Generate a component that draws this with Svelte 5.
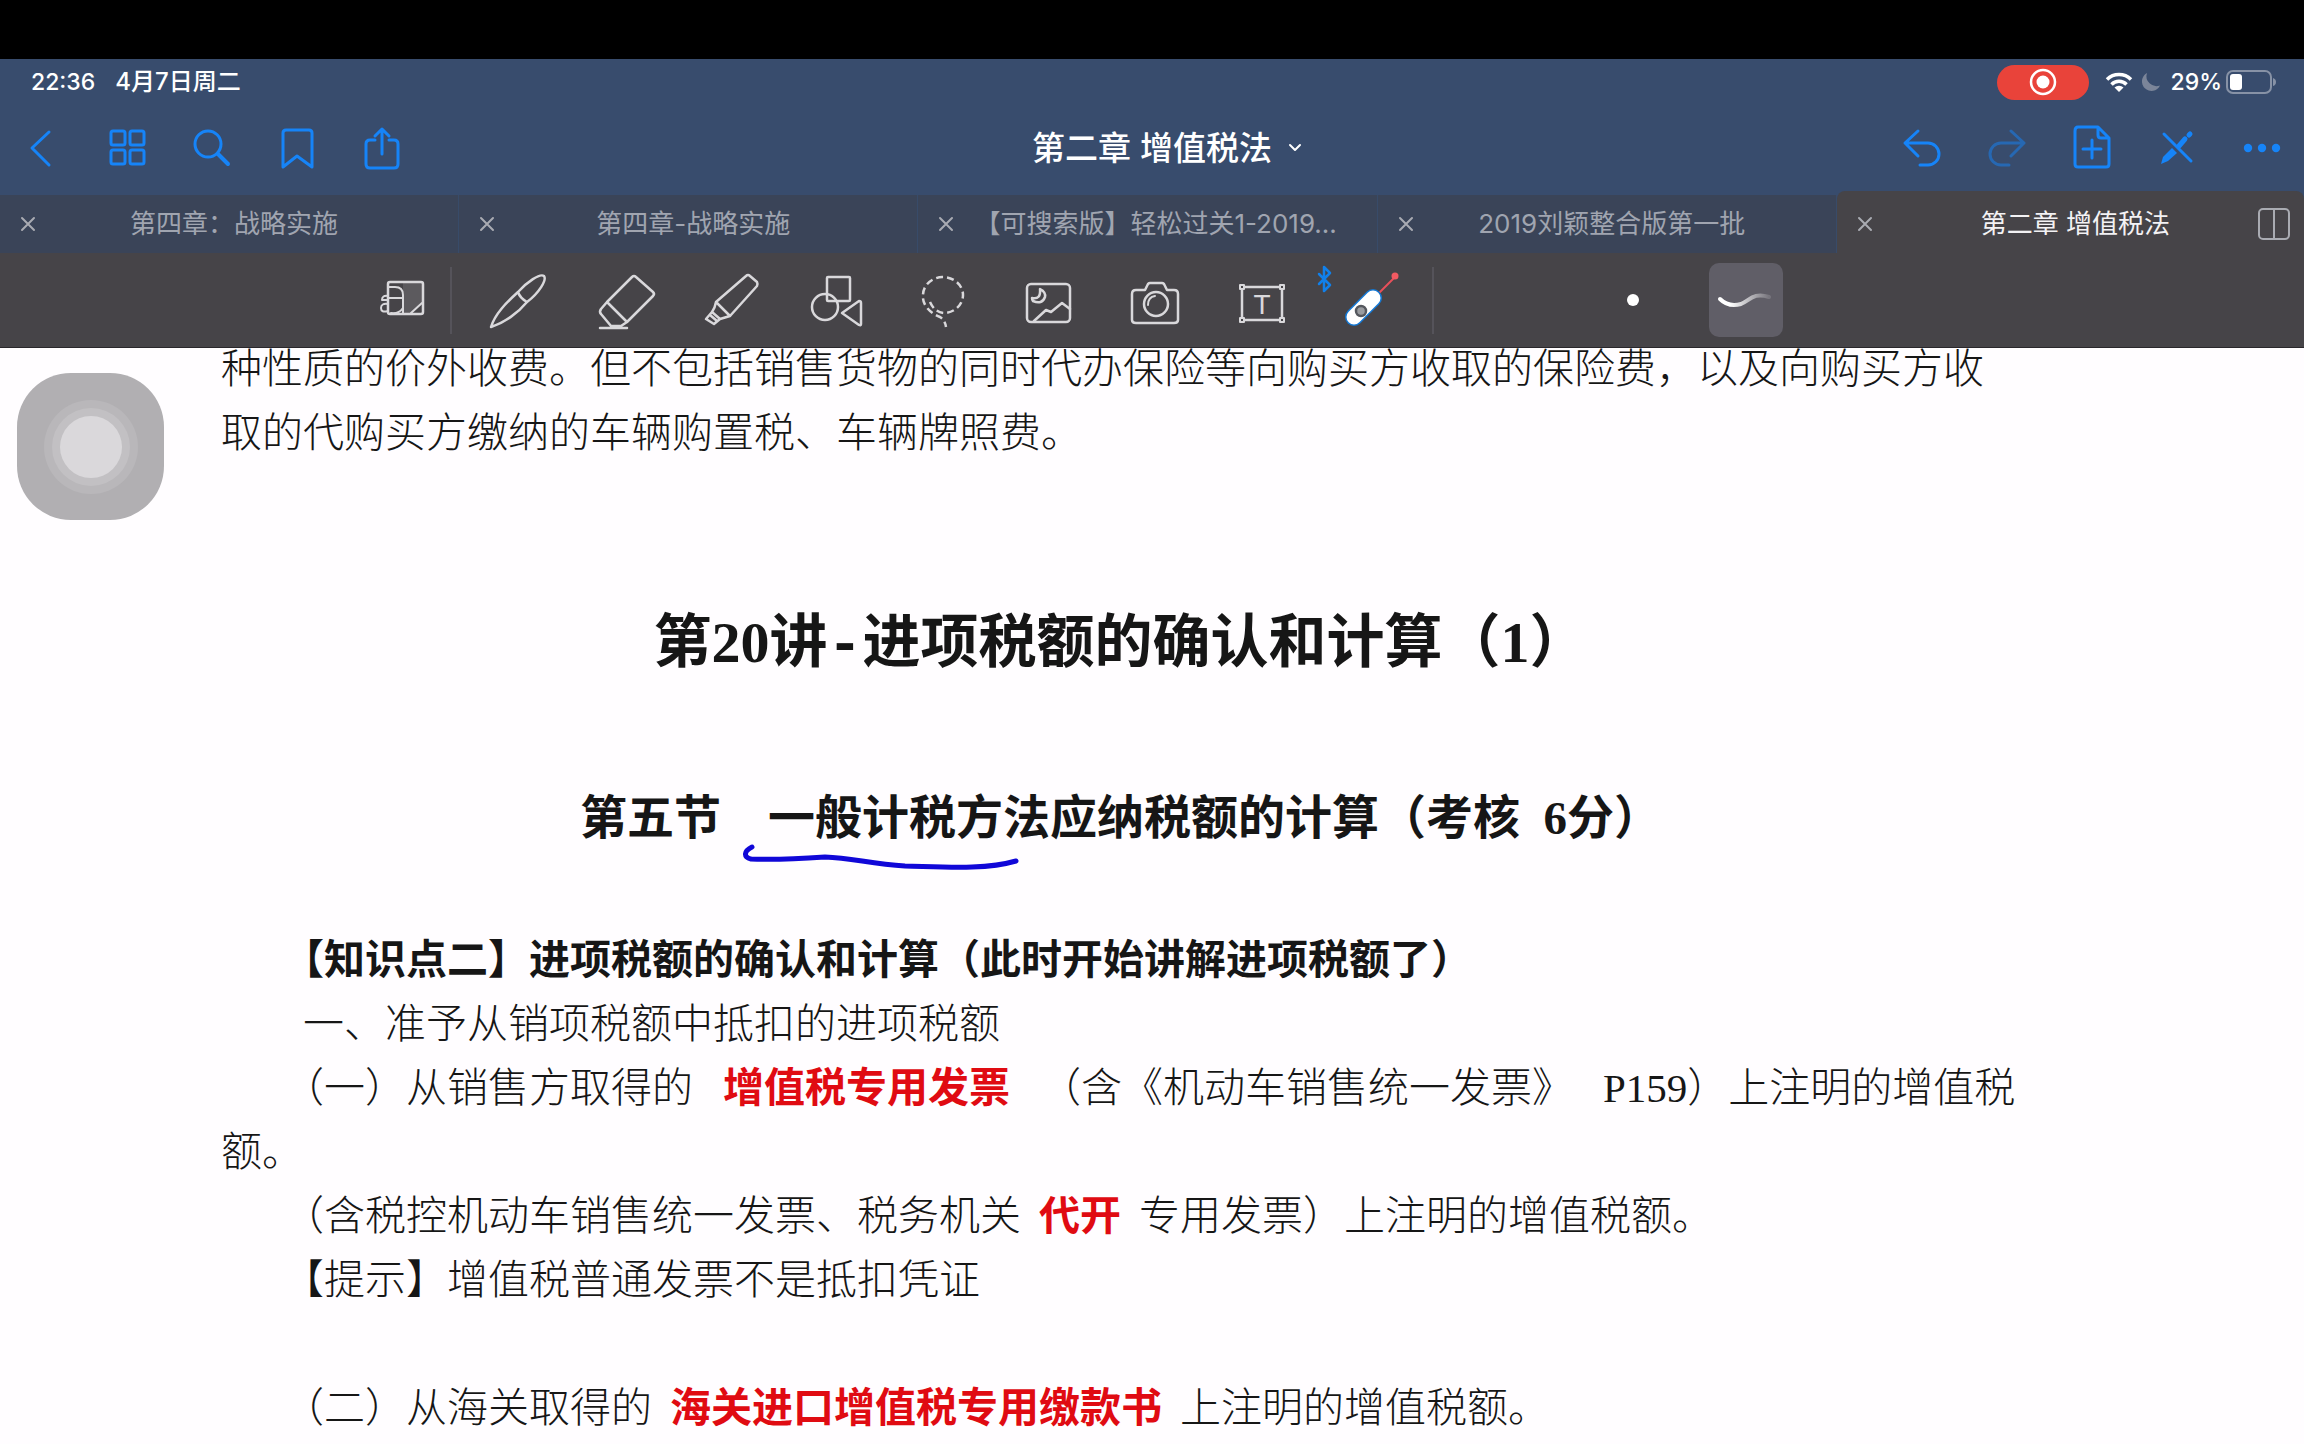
<script>
    let tabs = [
        { id: 1, title: "第四章：战略实施" },
        { id: 2, title: "第四章-战略实施" },
        { id: 3, title: "【可搜索版】轻松过关1-2019..." },
        { id: 4, title: "2019刘颖整合版第一批" },
        { id: 5, title: "第二章 增值税法" },
    ];

    let activeTab = 5;
    let penStyle = "stroke";

    function selectTab(id) {
        activeTab = id;
    }
</script>

<div class="app">
    <div class="bezel"></div>

    <header class="top">
        <div class="status">
            <span>22:36</span>
            <span class="date">4月7日周二</span>
            <span class="recording">
                <svg width="30" height="30" viewBox="0 0 30 30">
                    <circle cx="15" cy="15" r="12" fill="none" stroke="#fff" stroke-width="2.5" />
                    <circle cx="15" cy="15" r="6.5" fill="#fff" />
                </svg>
            </span>
            <svg class="wifi" width="28" height="22" viewBox="0 0 28 22">
                <path d="M2 8.5a17 17 0 0 1 24 0M6.5 13.5a10.5 10.5 0 0 1 15 0" fill="none" stroke="#fff" stroke-width="3.5" />
                <path d="M14 21l-4.5-4.5a6.5 6.5 0 0 1 9 0z" fill="#fff" />
            </svg>
            <svg class="moon" width="20" height="20" viewBox="0 0 20 20">
                <path d="M6 1a9.5 9.5 0 1 0 13 12.5A10 10 0 0 1 6 1z" fill="#7b8599" />
            </svg>
            <span>29%</span>
            <svg class="battery" width="50" height="24" viewBox="0 0 50 24">
                <rect x="1" y="1" width="44" height="22" rx="6" fill="none" stroke="#8792a6" stroke-width="2" />
                <rect x="4" y="4" width="12" height="16" rx="3" fill="#fff" />
                <path d="M47 8q3 1 3 4t-3 4z" fill="#8792a6" />
            </svg>
        </div>

        <nav class="nav">
            <div class="actions">
                <button aria-label="返回">
                    <svg viewBox="0 0 44 44"><path d="M29 6 12 22l17 17" /></svg>
                </button>
                <button aria-label="缩略图">
                    <svg viewBox="0 0 44 44">
                        <rect x="6" y="5" width="14" height="14" rx="2" />
                        <rect x="25" y="5" width="14" height="14" rx="2" />
                        <rect x="6" y="24" width="14" height="14" rx="2" />
                        <rect x="25" y="24" width="14" height="14" rx="2" />
                    </svg>
                </button>
                <button aria-label="搜索">
                    <svg viewBox="0 0 44 44">
                        <circle cx="18" cy="18" r="13" />
                        <path d="M28 28l10 10" stroke-width="4" />
                    </svg>
                </button>
                <button aria-label="书签">
                    <svg viewBox="0 0 44 44"><path d="M8 41V7q0-3 3-3h23q3 0 3 3v34L22 30z" /></svg>
                </button>
                <button aria-label="分享">
                    <svg viewBox="0 0 44 44">
                        <path d="M15 14h-5q-4 0-4 4v20q0 4 4 4h24q4 0 4-4V18q0-4-4-4h-5M22 28V3M15 10l7-7 7 7" />
                    </svg>
                </button>
            </div>

            <button class="doc-title">
                <span>第二章 增值税法</span>
                <svg width="14" height="10" viewBox="0 0 14 10"><path d="M2 2l5 5 5-5" /></svg>
            </button>

            <div class="actions right">
                <button aria-label="撤销">
                    <svg viewBox="0 0 44 44"><path d="M18 5 5 17l13 13M5 17h23a11 11 0 0 1 0 22h-8" /></svg>
                </button>
                <button aria-label="重做" disabled>
                    <svg viewBox="0 0 44 44"><path d="M26 5l13 12-13 13M39 17H16a11 11 0 0 0 0 22h8" /></svg>
                </button>
                <button aria-label="添加页面">
                    <svg viewBox="0 0 44 44">
                        <path d="M28 1H8Q5 1 5 5v33q0 3 3 3h28q3 0 3-3V12zM28 1v8q0 3 3 3h8M22 14v18M13 23h18" />
                    </svg>
                </button>
                <button aria-label="只读模式">
                    <svg viewBox="0 0 44 44">
                        <path d="M9 8l27 27" />
                        <path d="M6 38l2-7 9-9 5 5-9 8z" fill="#1684f8" stroke="none" />
                        <path d="M24 20l6-7M34 9l1-1" stroke-width="5" />
                    </svg>
                </button>
                <button aria-label="更多">
                    <svg viewBox="0 0 44 44">
                        <g fill="#1684f8" stroke="none">
                            <circle cx="8" cy="22" r="4.2" />
                            <circle cx="22" cy="22" r="4.2" />
                            <circle cx="36" cy="22" r="4.2" />
                        </g>
                    </svg>
                </button>
            </div>
        </nav>

        <div class="tabs">
            {#each tabs as tab (tab.id)}
                <div class="tab" class:active={tab.id === activeTab}>
                    <button class="close" aria-label="关闭">
                        <svg width="14" height="14" viewBox="0 0 14 14"><path d="M1 1l12 12M13 1 1 13" /></svg>
                    </button>
                    <button class="tab-title" on:click={() => selectTab(tab.id)}>{tab.title}</button>
                    {#if tab.id === activeTab}
                        <button class="split" aria-label="分屏">
                            <svg width="32" height="32" viewBox="0 0 32 32">
                                <rect x="1" y="1" width="30" height="30" rx="4" />
                                <path d="M16 1v30" />
                            </svg>
                        </button>
                    {/if}
                </div>
            {/each}
        </div>
    </header>

    <div class="toolbar">
        <div class="lead">
            <button aria-label="缩放窗口">
                <svg viewBox="0 0 64 64">
                    <path d="M32 15h19v20L41 45h-9z" fill="#5c5a5e" stroke="none" />
                    <rect x="17" y="14" width="35" height="32" rx="2" />
                    <path d="M18 19h6q8 0 8 8v18M18 30h14M17 28q-6-1-6 4h6M17 36q-7-1-7 4t7 3M20 45q8 1 12-5M40 45l11-10" stroke-width="2" />
                </svg>
            </button>
        </div>
        <span class="divider"></span>
        <div class="tools">
            <button aria-label="钢笔">
                <svg viewBox="0 0 64 64">
                    <path d="M5 59C9 46 20 35 32 24 41 14 54 5 58 8c3 4-5 17-17 26C32 45 18 55 5 59zM32 24q2 6 9 10" />
                </svg>
            </button>
            <button aria-label="橡皮擦">
                <svg viewBox="0 0 64 64">
                    <path d="M40 9q2-2 4 0l17 15q2 2 0 4L35 54 15 34zM15 34l-6 7q-2 3 0 5l10 12h10l6-4M8 60h27" />
                </svg>
            </button>
            <button aria-label="荧光笔">
                <svg viewBox="0 0 64 64">
                    <path d="M48 8q2-2 4 0l7 6q1 2 0 4L32 48 18 34zM18 34q-1 6-4 10l8 7 10-3M14 44l-6 7 8 5 6-5M12 47l7 6" />
                </svg>
            </button>
            <button aria-label="形状">
                <svg viewBox="0 0 64 64">
                    <rect x="23" y="9" width="23" height="24" rx="1" />
                    <circle cx="21" cy="39" r="13" />
                    <path d="M38 45l17-12q2 0 2 2v21q0 2-2 1z" />
                </svg>
            </button>
            <button aria-label="套索">
                <svg viewBox="0 0 64 64">
                    <path class="dashed" d="M20 34Q25 45 35 45A20 18 0 1 0 13 27C12 37 20 45 30 49q5 3 6 10" />
                </svg>
            </button>
            <button aria-label="图片">
                <svg viewBox="0 0 64 64">
                    <rect x="11" y="16" width="43" height="38" rx="4" />
                    <path d="M18 53l12-11 5 2 11-9 8 6M24 21q6 3 5 8-3 8-12 4-1-1-1-3 9 2 8-9z" />
                </svg>
            </button>
            <button aria-label="相机">
                <svg viewBox="0 0 64 64">
                    <path d="M23 22l3-6q1-1 2-1h12q1 0 2 1l3 6h7q4 0 4 4v26q0 3-4 3H14q-4 0-4-3V26q0-4 4-4z" />
                    <circle cx="34" cy="36" r="12" />
                    <path d="M26 37q0-8 7-9" stroke-width="2" />
                </svg>
            </button>
            <button aria-label="文本">
                <svg viewBox="0 0 64 64">
                    <path d="M17 19h34M17 52h34M14 22v27M54 22v27" />
                    <g stroke-width="2">
                        <rect x="12" y="17" width="4" height="4" /><rect x="52" y="17" width="4" height="4" />
                        <rect x="12" y="50" width="4" height="4" /><rect x="52" y="50" width="4" height="4" />
                    </g>
                    <text x="34" y="46" text-anchor="middle">T</text>
                </svg>
            </button>
            <button aria-label="激光笔">
                <svg viewBox="0 0 64 64">
                    <path d="M-15 6l11 11-6 6V-1l6 6-11 11" stroke="#1180ea" />
                    <path d="M46 24 61 9" stroke="#e8505a" stroke-width="2" />
                    <circle cx="61" cy="8" r="3.5" fill="#f25a62" stroke="none" />
                    <path d="M20 49l19-19" stroke="#1478d4" stroke-width="18" />
                    <path d="M20 49l19-19" stroke="#fff" stroke-width="15" />
                    <circle cx="27" cy="43" r="5" fill="#9a9ca0" stroke="#55585e" />
                </svg>
            </button>
        </div>
        <span class="divider"></span>
        <div class="styles">
            <button class="style" class:selected={penStyle === "dot"} aria-label="点" on:click={() => (penStyle = "dot")}>
                <svg viewBox="0 0 74 74"><circle cx="37" cy="37" r="6" fill="#fff" stroke="none" /></svg>
            </button>
            <button class="style" class:selected={penStyle === "stroke"} aria-label="笔画" on:click={() => (penStyle = "stroke")}>
                <svg viewBox="0 0 74 74">
                    <defs>
                        <linearGradient id="fadeStroke">
                            <stop offset="0.2" stop-color="#fff" />
                            <stop offset="1" stop-color="#77757d" />
                        </linearGradient>
                    </defs>
                    <path d="M11 36c6 6 14 7 21 5 9-4 13-12 28-7" stroke="url(#fadeStroke)" stroke-width="4" />
                </svg>
            </button>
        </div>
    </div>

    <main class="page">
        <button class="assistive" aria-label="辅助触控"><span></span></button>

        <article>
            <p>种性质的价外收费。但不包括销售货物的同时代办保险等向购买方收取的保险费，以及向购买方收取的代购买方缴纳的车辆购置税、车辆牌照费。</p>

            <h1>第20讲<span class="dash">-</span>进项税额的确认和计算（1）</h1>

            <h2>第五节&emsp;<span class="inked">一般计税方法<svg width="284" height="32" viewBox="0 0 284 32"><path d="M12 3c-8 4-9 10-1 12 20 1 45 0 74-2 28 1 45 7 80 9 40 1 80 4 111-5" /></svg></span>应纳税额的计算（考核&ensp;6分）</h2>

            <h3 class="hang">【知识点二】进项税额的确认和计算（此时开始讲解进项税额了）</h3>
            <p class="indent">一、准予从销项税额中抵扣的进项税额</p>
            <p class="hang">（一）从销售方取得的<strong class="wide">增值税专用发票</strong>（含《机动车销售统一发票》<span class="ref">P159</span>）上注明的增值税<span>额。</span></p>
            <p class="hang">（含税控机动车销售统一发票、税务机关<strong>代开</strong>专用发票）上注明的增值税额。</p>
            <p class="hang">【提示】增值税普通发票不是抵扣凭证</p>
            <p class="hang gap">（二）从海关取得的<strong>海关进口增值税专用缴款书</strong>上注明的增值税额。</p>
        </article>
    </main>
</div>

<style>
    :global(body) {
        margin: 0;
        background: #fffdff;
    }

    .app {
        display: flex;
        flex-direction: column;
        height: 100vh;
        overflow: hidden;
        font-family: Inter, "Noto Sans CJK SC", sans-serif;
        color: #fff;
    }

    button {
        border: 0;
        padding: 0;
        background: none;
        color: inherit;
        font: inherit;
        cursor: pointer;
    }

    svg {
        display: block;
        fill: none;
        stroke-linecap: round;
        stroke-linejoin: round;
        overflow: visible;
    }

    .bezel {
        flex: none;
        height: 59px;
        background: #000;
    }

    .top {
        flex: none;
        background: #384c6d;
    }

    .status {
        display: flex;
        align-items: center;
        height: 46px;
        padding: 0 28px 0 31px;
        font-size: 23px;
        font-weight: 500;
        line-height: 32px;
    }

    .date {
        margin-left: 20px;
        font-size: 24px;
    }

    .recording {
        display: flex;
        align-items: center;
        justify-content: center;
        width: 92px;
        height: 35px;
        margin-left: auto;
        border-radius: 18px;
        background: #e9433a;
    }

    .wifi {
        margin-left: 16px;
        stroke-linecap: butt;
    }

    .moon {
        margin: 0 9px 0 8px;
    }

    .battery {
        margin-left: 4px;
    }

    .nav {
        display: grid;
        grid-template-columns: 1fr auto 1fr;
        align-items: center;
        height: 86px;
        padding: 0 20px;
    }

    .actions {
        display: flex;
        gap: 41px;
    }

    .actions.right {
        justify-content: flex-end;
    }

    .actions svg {
        width: 44px;
        height: 44px;
        stroke: #1684f8;
        stroke-width: 3;
    }

    .actions button:disabled {
        opacity: 0.5;
    }

    .doc-title {
        display: flex;
        align-items: center;
        gap: 16px;
        padding-left: 30px;
        font-size: 33px;
        font-weight: 500;
        line-height: 44px;
    }

    .doc-title svg {
        stroke: #fff;
        stroke-width: 2;
    }

    .tabs {
        display: grid;
        grid-template-columns: repeat(4, 459fr) 467fr;
        align-items: end;
        height: 62px;
    }

    .tab {
        display: flex;
        align-items: center;
        box-sizing: border-box;
        min-width: 0;
        height: 58px;
        padding-right: 46px;
        border-right: 1px solid #384b69;
        background: #3a4458;
        color: #a0a5b0;
        font-size: 26px;
        line-height: 36px;
    }

    .tab.active {
        height: 62px;
        padding: 4px 0 0;
        border-right: 0;
        border-radius: 8px 8px 0 0;
        background: #464448;
        color: #f3f2f4;
    }

    .close,
    .split {
        display: flex;
        flex: none;
        align-items: center;
        justify-content: center;
        width: 56px;
    }

    .split {
        justify-content: flex-start;
        width: 46px;
    }

    .close svg,
    .split svg {
        stroke: #a9abb2;
        stroke-width: 2;
    }

    .tab-title {
        flex: 1;
        min-width: 0;
        white-space: nowrap;
    }

    .toolbar {
        display: flex;
        flex: none;
        align-items: center;
        height: 95px;
        border-bottom: 1px solid #29272b;
        background: #464448;
        box-sizing: border-box;
    }

    .toolbar svg {
        width: 64px;
        height: 64px;
        stroke: #d9d8db;
        stroke-width: 2.5;
    }

    .toolbar text {
        fill: #d9d8db;
        stroke: none;
        font: 28px "Liberation Sans", sans-serif;
    }

    .dashed {
        stroke-linecap: butt;
        stroke-dasharray: 7 4;
    }

    .lead {
        display: flex;
        justify-content: flex-end;
        width: 435px;
        padding-right: 15px;
    }

    .divider {
        width: 2px;
        height: 67px;
        background: #55535a;
    }

    .tools {
        display: flex;
        gap: 42px;
        padding: 0 34px;
    }

    .styles {
        display: flex;
        gap: 39px;
        margin-left: 162px;
    }

    .toolbar .style svg {
        width: 74px;
        height: 74px;
    }

    .style {
        border-radius: 10px;
    }

    .style.selected {
        background: #605e67;
    }

    .page {
        position: relative;
        flex: 1;
        min-height: 0;
        overflow: hidden;
        background: #fffdff;
        color: #161616;
    }

    .assistive {
        position: absolute;
        top: 25px;
        left: 17px;
        display: flex;
        align-items: center;
        justify-content: center;
        width: 147px;
        height: 147px;
        border-radius: 54px;
        background: #b1afb2;
    }

    .assistive span {
        width: 62px;
        height: 62px;
        border-radius: 50%;
        background: #dad8db;
        box-shadow: 0 0 0 8px #c2c0c3, 0 0 0 16px #b9b7ba;
    }

    article {
        margin-top: -11px;
        padding: 0 284px 0 221px;
        font-family: "Liberation Serif", "Noto Sans CJK SC", serif;
        font-size: 41px;
        font-weight: 300;
        line-height: 64px;
    }

    p,
    h1,
    h2,
    h3 {
        margin: 0;
    }

    h1 {
        margin-top: 138px;
        font-size: 58px;
        line-height: 80px;
        text-align: center;
    }

    h2 {
        margin: 103px 0 78px;
        font-size: 47px;
        line-height: 64px;
        text-align: center;
    }

    h3 {
        font-size: 41px;
    }

    .dash {
        font-family: "Liberation Mono", monospace;
        line-height: 1;
    }

    .indent {
        text-indent: 82px;
    }

    .hang {
        text-indent: 62px;
    }

    .gap {
        margin-top: 64px;
    }

    strong {
        margin: 0 18px;
        color: #e00b12;
        font-weight: 700;
    }

    .wide {
        margin: 0 30px;
    }

    .ref {
        margin-left: 30px;
    }

    /* pen stroke drawn over the heading */
    .inked {
        position: relative;
    }

    .inked svg {
        position: absolute;
        top: 100%;
        left: -28px;
        stroke: #1007d8;
        stroke-width: 5;
    }
</style>
